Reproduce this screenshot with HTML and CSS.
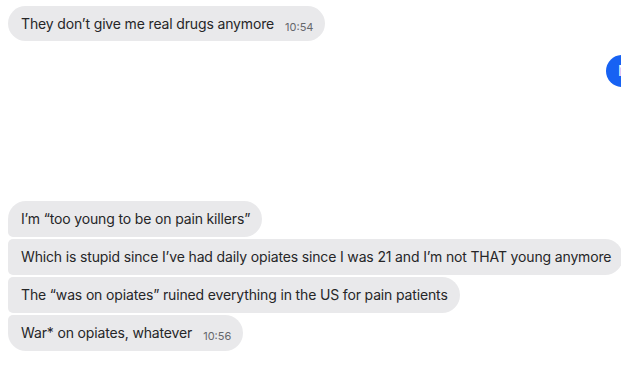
FILE: index.html
```html
<!DOCTYPE html>
<html>
<head>
<meta charset="utf-8">
<link rel="stylesheet" href="styles.css">
</head>
<body>
<div class="chat">
  <div class="row in">
    <div class="bubble single"><span class="text">They don’t give me real drugs anymore</span><span class="time">10:54</span></div>
  </div>
  <div class="row out">
    <div class="bubble outb"><span class="text">No</span></div>
  </div>
  <div class="group">
    <div class="row in">
      <div class="bubble first"><span class="text">I’m “too young to be on pain killers”</span></div>
    </div>
    <div class="row in">
      <div class="bubble mid"><span class="text">Which is stupid since I’ve had daily opiates since I was 21 and I’m not THAT young anymore</span></div>
    </div>
    <div class="row in">
      <div class="bubble mid"><span class="text">The “was on opiates” ruined everything in the US for pain patients</span></div>
    </div>
    <div class="row in">
      <div class="bubble last"><span class="text">War* on opiates, whatever</span><span class="time">10:56</span></div>
    </div>
  </div>
</div>
</body>
</html>
```
FILE: styles.css
```css
html, body {
  margin: 0;
  padding: 0;
  background: #ffffff;
  overflow: hidden;
}
.chat {
  width: 621px;
  height: 374px;
  padding: 6px 0 0 8px;
  box-sizing: border-box;
  font-family: Inter, "Noto Sans", sans-serif;
  font-size: 14px;
  letter-spacing: -0.15px;
  color: #262628;
  display: flex;
  flex-direction: column;
}
.row {
  display: flex;
  white-space: nowrap;
}
.row.out {
  margin-top: 14px;
  padding-left: 598px;
}
.bubble {
  display: block;
  background: #e9e9eb;
  padding: 8px 12px 8px 13px;
  height: 20px;
  line-height: 20px;
  border-radius: 18px;
  flex-shrink: 0;
}
.bubble.single { height: 19px; line-height: 19px; }
.bubble.first { border-radius: 18px 18px 18px 5px; }
.bubble.mid { border-radius: 5px 18px 18px 5px; }
.bubble.last { border-radius: 5px 18px 18px 18px; }
.bubble.outb {
  background: #1762f3;
  color: #ffffff;
  padding: 6px 12px;
}
.time {
  display: inline-block;
  margin-left: 11px;
  font-size: 11px;
  line-height: 10px;
  letter-spacing: 0;
  color: #65676b;
  position: relative;
  top: 2px;
}
.group {
  margin-top: 114px;
  display: flex;
  flex-direction: column;
  gap: 2px;
}
```
